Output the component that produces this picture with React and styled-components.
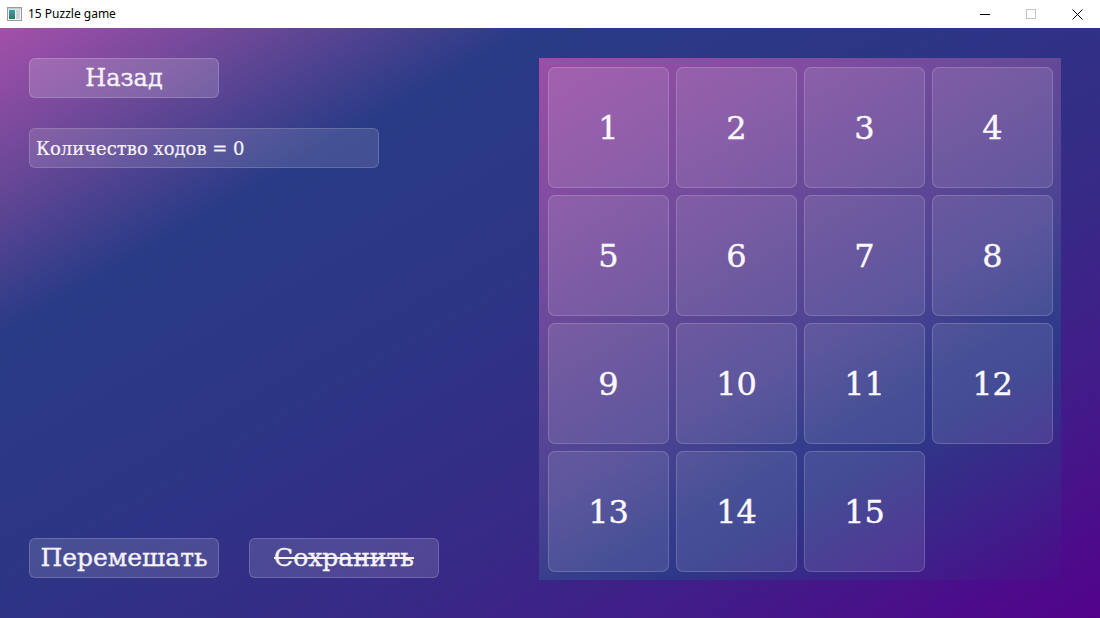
import React from "react";
import styled, { createGlobalStyle } from "styled-components";

const Global = createGlobalStyle`
  html, body { margin: 0; padding: 0; width: 1100px; height: 618px; overflow: hidden; }
  body { font-family: "DejaVu Serif", "Liberation Serif", serif; }
`;

const Window = styled.div`
  width: 1100px;
  height: 618px;
  display: flex;
  flex-direction: column;
`;

const TitleBar = styled.div`
  height: 28px;
  flex: none;
  background: #ffffff;
  display: flex;
  align-items: center;
  font-family: "Noto Sans", "Liberation Sans", sans-serif;
  font-size: 12px;
  color: #000;
`;

const AppIcon = styled.svg`
  margin: 0 6px 0 7px;
  flex: none;
`;

const Title = styled.span`
  flex: 1;
  line-height: 1;
`;

const WinButton = styled.div`
  width: 46px;
  height: 28px;
  display: flex;
  align-items: center;
  justify-content: center;
`;

const Content = styled.div`
  flex: 1;
  display: flex;
  justify-content: space-between;
  padding: 30px 39px 38px 29px;
  background: linear-gradient(150deg, #a450aa 0%, #6c4898 12%, #293b86 25%, #2d3585 45%, #372a86 65%, #431a89 82%, #52028b 100%);
`;

const LeftColumn = styled.div`
  width: 410px;
  display: flex;
  flex-direction: column;
  justify-content: space-between;
  padding-bottom: 2px;
`;

const TopGroup = styled.div`
  display: flex;
  flex-direction: column;
  gap: 30px;
`;

const BottomGroup = styled.div`
  display: flex;
  gap: 30px;
`;

const GlassButton = styled.button`
  width: 190px;
  height: 40px;
  box-sizing: border-box;
  padding: 0;
  border: 1px solid rgba(255, 255, 255, 0.18);
  border-radius: 6px;
  background: rgba(255, 255, 255, ${(p) => p.$alpha || 0.13});
  color: #f6f2fa;
  font-family: "DejaVu Serif", "Liberation Serif", serif;
  font-size: ${(p) => p.$size || 24}px;
  -webkit-text-stroke: 0.35px currentColor;
  line-height: 38px;
  text-align: center;
  text-decoration: ${(p) => (p.$disabled ? "line-through" : "none")};
  text-decoration-thickness: 2px;
  cursor: default;
`;

const Counter = styled.div`
  width: 350px;
  height: 40px;
  box-sizing: border-box;
  border: 1px solid rgba(255, 255, 255, 0.16);
  border-radius: 6px;
  background: rgba(255, 255, 255, 0.12);
  color: #f6f2fa;
  font-size: 18px;
  -webkit-text-stroke: 0.2px currentColor;
  display: flex;
  align-items: center;
  padding-left: 6px;
`;

const Board = styled.div`
  width: 522px;
  height: 522px;
  box-sizing: border-box;
  padding: 9px 8px 8px 9px;
  display: grid;
  grid-template-columns: repeat(4, 1fr);
  grid-template-rows: repeat(4, 1fr);
  gap: 7px;
  background: linear-gradient(150deg, #9c4ea6 0%, #7c4c9f 22%, #604896 40%, #4a4392 55%, #333d8b 66%, #2e3888 72%, #3a2689 84%, #4b0c8a 100%);
`;

const Tile = styled.div`
  box-sizing: border-box;
  border: 1px solid rgba(255, 255, 255, 0.17);
  border-radius: 7px;
  background: rgba(255, 255, 255, 0.1);
  color: #fbf8fd;
  font-size: 32px;
  -webkit-text-stroke: 0.4px currentColor;
  display: flex;
  align-items: center;
  justify-content: center;
  padding-top: 1px;
`;

const EmptyCell = styled.div``;

const tiles = [1, 2, 3, 4, 5, 6, 7, 8, 9, 10, 11, 12, 13, 14, 15, 0];

export default function App() {
  return (
    <Window>
      <Global />
      <TitleBar>
        <AppIcon width="15" height="14" viewBox="0 0 15 14">
          <defs>
            <linearGradient id="ig" x1="0" y1="0" x2="0" y2="1">
              <stop offset="0" stopColor="#3aa0b8" />
              <stop offset="1" stopColor="#2e7a5a" />
            </linearGradient>
          </defs>
          <rect x="0.5" y="0.5" width="14" height="13" fill="#f4f4f4" stroke="#9a9a9a" />
          <rect x="2" y="3" width="6" height="9" fill="url(#ig)" />
          <rect x="9" y="3" width="4" height="9" fill="#d0d4d8" />
          <rect x="1" y="1" width="13" height="1.5" fill="#c8cdd2" />
        </AppIcon>
        <Title>15 Puzzle game</Title>
        <WinButton>
          <svg width="10" height="10" viewBox="0 0 10 10">
            <line x1="0" y1="5.5" x2="10" y2="5.5" stroke="#000" strokeWidth="1" />
          </svg>
        </WinButton>
        <WinButton>
          <svg width="10" height="10" viewBox="0 0 10 10">
            <rect x="0.5" y="0.5" width="9" height="9" fill="none" stroke="#c4c4c4" strokeWidth="1" />
          </svg>
        </WinButton>
        <WinButton>
          <svg width="11" height="11" viewBox="0 0 11 11">
            <path d="M0.5 0.5 L10.5 10.5 M10.5 0.5 L0.5 10.5" stroke="#000" strokeWidth="1" />
          </svg>
        </WinButton>
      </TitleBar>
      <Content>
        <LeftColumn>
          <TopGroup>
            <GlassButton $alpha={0.16}>Назад</GlassButton>
            <Counter>Количество ходов = 0</Counter>
          </TopGroup>
          <BottomGroup>
            <GlassButton $size={25}>Перемешать</GlassButton>
            <GlassButton $size={25} $disabled>Сохранить</GlassButton>
          </BottomGroup>
        </LeftColumn>
        <Board>
          {tiles.map((n) =>
            n ? <Tile key={n}>{n}</Tile> : <EmptyCell key="empty" />
          )}
        </Board>
      </Content>
    </Window>
  );
}
